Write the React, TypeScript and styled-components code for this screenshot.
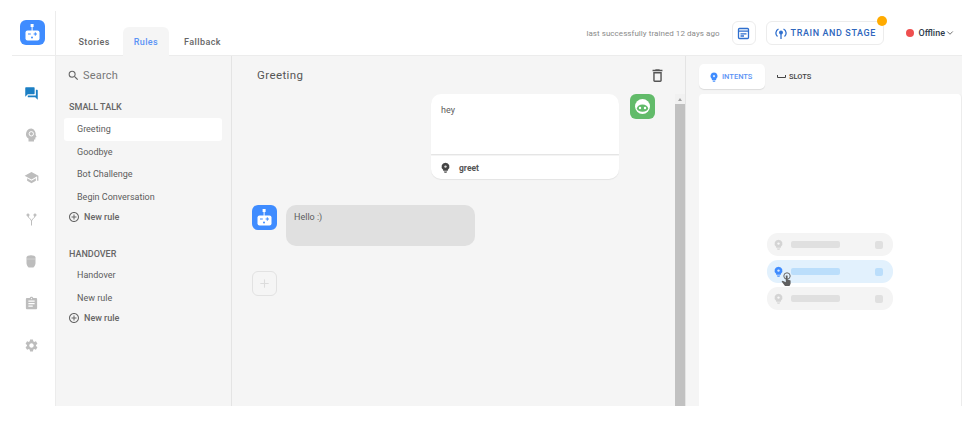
import React from 'react';
import styled, { createGlobalStyle } from 'styled-components';
import {
  MdAddCircleOutline,
  MdAssignment,
  MdOutlineDelete,
  MdQuestionAnswer,
  MdSchool,
  MdSearch,
  MdSettings,
} from 'react-icons/md';
import { ChevronDown, Plus } from 'lucide-react';

const GlobalStyle = createGlobalStyle`
  html, body {
    margin: 0;
    background: #fff;
    overflow: hidden;
  }
  body {
    font-family: Roboto, "Liberation Sans", sans-serif;
  }
`;

const railIcons = ['chat', 'bulb', 'school', 'fork', 'cup', 'clip', 'gear'];

const BotLogo = ({ size }: { size: number }) => (
  <svg width={size} height={size} viewBox="0 0 25 25">
    <rect width="25" height="25" rx="6" fill="#3f8cff" />
    <rect x="10.600" y="4" width="3" height="3" fill="#fff" />
    <rect x="11.600" y="6.500" width="1" height="4.500" fill="#fff" />
    <rect x="5.500" y="10.500" width="14" height="10" rx="2" fill="#fff" />
    <rect x="8" y="13.500" width="2.800" height="1" fill="#3f8cff" />
    <rect x="13.600" y="13.500" width="3.400" height="1" fill="#3f8cff" />
    <rect x="14.800" y="12.300" width="1" height="3.400" fill="#3f8cff" />
    <circle cx="12" cy="17.500" r="1" fill="#3f8cff" />
  </svg>
);

const UserLogo = () => (
  <svg width="25" height="25" viewBox="0 0 25 25">
    <rect width="25" height="25" rx="6" fill="#62bb6a" />
    <circle cx="12.500" cy="12.500" r="7.500" fill="#fff" />
    <ellipse cx="12.500" cy="14.200" rx="5.600" ry="3.600" fill="#62bb6a" />
    <circle cx="10" cy="14" r="1.200" fill="#fff" />
    <circle cx="15" cy="14" r="1.200" fill="#fff" />
  </svg>
);

const Bulb = ({ size, color }: { size: number; color: string }) => (
  <svg width={size} height={size} viewBox="0 0 14 14">
    <path
      d="M7 .8a5 5 0 0 0-3 9v1.400h6V9.800a5 5 0 0 0-3-9zM5 12h4v.8L8 13.600H6l-1-.8z"
      fill={color}
    />
    <circle cx="7" cy="5.800" r="1.500" fill="#fff" opacity="0.8" />
  </svg>
);

const RailIcon = ({ name }: { name: string }) => {
  const grey = '#bdbdbd';
  if (name === 'chat') return <MdQuestionAnswer size={15} color="#1b7fc4" />;
  if (name === 'school') return <MdSchool size={15} color={grey} />;
  if (name === 'clip') return <MdAssignment size={15} color={grey} />;
  if (name === 'gear') return <MdSettings size={15} color={grey} />;
  if (name === 'bulb') {
    return (
      <svg width="13" height="14" viewBox="0 0 13 14">
        <path d="M6.500.5a5.500 5.500 0 0 0-3 10.100V13.500h5.500v-2h1.300V9.500l1.300-.6-1-2A5.500 5.500 0 0 0 6.500.5z" fill={grey} />
        <circle cx="6.300" cy="5.800" r="2.200" fill="none" stroke="#fff" strokeWidth="1" />
      </svg>
    );
  }
  if (name === 'fork') {
    return (
      <svg width="11" height="13" viewBox="0 0 11 13" fill="none" stroke={grey} strokeWidth="1">
        <path d="M2 2.500c0 3 3.500 3.500 3.500 5.500v4.500M9 2.500c0 3-3.500 3.500-3.500 5.500" />
        <circle cx="2" cy="2" r="1.100" fill={grey} />
        <circle cx="9" cy="2" r="1.100" fill={grey} />
      </svg>
    );
  }
  return (
    <svg width="12" height="14" viewBox="0 0 12 14">
      <path d="M1.500 3.500C1.500 .5 10.500 .5 10.500 3.500V9C10.500 11 9 13.500 8 13.500H4C3 13.500 1.500 11 1.500 9z" fill={grey} />
      <path d="M2 5h8" stroke="#d8d8d8" strokeWidth="0.700" />
    </svg>
  );
};

const HintRow = ({ active }: { active?: boolean }) => (
  <Hint active={active}>
    <Bulb size={11} color={active ? '#3f8cff' : '#d4d4d4'} />
    <HintBar active={active} />
    <HintDot active={active} />
    {active && (
      <Cursor viewBox="0 0 12 14" width="12" height="14">
        <circle cx="7" cy="4" r="3.200" fill="none" stroke="#666" strokeWidth="1" />
        <path d="M5.800 3.500h1.800v4l3 1v3.300L9.500 14H5L1.600 9.500l1-.8 3.200 1.600z" fill="#5f5f5f" />
      </Cursor>
    )}
  </Hint>
);

const App = () => (
  <>
    <GlobalStyle />
    <Frame>
      <Rail>
        <LogoCell>
          <BotLogo size={25} />
        </LogoCell>
        <RailNav>
          {railIcons.map((name) => (
            <RailItem key={name}>
              <RailIcon name={name} />
            </RailItem>
          ))}
        </RailNav>
      </Rail>
      <Main>
        <TopBar>
          <Tabs>
            <Tab>Stories</Tab>
            <Tab active>Rules</Tab>
            <Tab>Fallback</Tab>
          </Tabs>
          <TopActions>
            <TrainedText>last successfully trained 12 days ago</TrainedText>
            <SquareButton>
              <svg width="13" height="13" viewBox="0 0 13 13" fill="none" stroke="#2f6fce" strokeWidth="1.300">
                <rect x="1.500" y="1.500" width="10" height="10" rx="1" />
                <path d="M1.500 4.200h10M3.500 6.800h6M3.500 9h3.500" />
              </svg>
            </SquareButton>
            <TrainButton>
              <svg width="12" height="13" viewBox="0 0 12 13" fill="none" stroke="#2f6fce" strokeWidth="1.300">
                <path d="M2.500 9.500a4.500 4.500 0 0 1 1-7.500M9.500 9.500a4.500 4.500 0 0 0-1-7.500" />
                <path d="M6 12V6" />
                <circle cx="6" cy="5.500" r="1.300" fill="#2f6fce" />
              </svg>
              TRAIN AND STAGE
              <Badge />
            </TrainButton>
            <Status>
              <StatusDot />
              Offline
              <ChevronDown size={10} color="#555" />
            </Status>
          </TopActions>
        </TopBar>
        <Body>
          <Sidebar>
            <SearchRow>
              <MdSearch size={13} color="#666" />
              Search
            </SearchRow>
            <GroupTitle>SMALL TALK</GroupTitle>
            <RuleItem active>Greeting</RuleItem>
            <RuleItem>Goodbye</RuleItem>
            <RuleItem>Bot Challenge</RuleItem>
            <RuleItem>Begin Conversation</RuleItem>
            <NewRule>
              <MdAddCircleOutline size={12} color="#666" />
              New rule
            </NewRule>
            <GroupTitle second>HANDOVER</GroupTitle>
            <RuleItem>Handover</RuleItem>
            <RuleItem>New rule</RuleItem>
            <NewRule>
              <MdAddCircleOutline size={12} color="#666" />
              New rule
            </NewRule>
          </Sidebar>
          <Editor>
            <EditorHead>
              <EditorTitle>Greeting</EditorTitle>
              <MdOutlineDelete size={17} color="#555" />
            </EditorHead>
            <EditorBody>
              <Story>
                <UserRow>
                  <UserCard>
                    <UserText>hey</UserText>
                    <IntentRow>
                      <Bulb size={11} color="#444" />
                      greet
                    </IntentRow>
                  </UserCard>
                  <UserLogo />
                </UserRow>
                <BotRow>
                  <BotLogo size={25} />
                  <BotBubble>Hello :)</BotBubble>
                </BotRow>
                <AddStep>
                  <Plus size={13} color="#dcdcdc" />
                </AddStep>
              </Story>
              <Scrollbar>
                <ScrollArrow />
                <ScrollThumb />
              </Scrollbar>
            </EditorBody>
          </Editor>
          <Aside>
            <AsideTabs>
              <AsideTab active>
                <Bulb size={10} color="#3f8cff" />
                INTENTS
              </AsideTab>
              <AsideTab>
                <svg width="9" height="4" viewBox="0 0 9 4" fill="none" stroke="#444" strokeWidth="1">
                  <path d="M.5 0v2.500h8V0" />
                </svg>
                SLOTS
              </AsideTab>
            </AsideTabs>
            <HelpCard>
              <HintRow />
              <HintRow active />
              <HintRow />
            </HelpCard>
          </Aside>
        </Body>
      </Main>
    </Frame>
  </>
);

const Frame = styled.div`
  width: 950px;
  height: 395px;
  margin: 11px 0 0 12px;
  display: flex;
`;

const Rail = styled.div`
  width: 43px;
  box-sizing: content-box;
  flex-shrink: 0;
  display: flex;
  flex-direction: column;
  border-right: 1px solid #ececec;
`;

const LogoCell = styled.div`
  height: 45px;
  padding: 9px 0 0 8px;
  box-sizing: border-box;
  border-bottom: 1px solid #ececec;
`;

const RailNav = styled.div`
  display: flex;
  flex-direction: column;
  padding-top: 16px;
`;

const RailItem = styled.div`
  height: 42.100px;
  width: 38px;
  display: flex;
  justify-content: center;
  align-items: center;
`;

const Main = styled.div`
  flex: 1;
  min-width: 0;
  display: flex;
  flex-direction: column;
`;

const TopBar = styled.div`
  height: 45px;
  box-sizing: border-box;
  flex-shrink: 0;
  display: flex;
  justify-content: space-between;
  border-bottom: 1px solid #ececec;
`;

const Tabs = styled.div`
  display: flex;
  align-items: flex-end;
  padding-left: 12px;
  margin-bottom: -1px;
`;

const Tab = styled.div<{ active?: boolean }>`
  height: 29px;
  box-sizing: border-box;
  padding: 10px 10.500px 0;
  margin: ${(p) => (p.active ? '0 5px 0 -1px' : '0 4px 0 0')};
  border-radius: 6px 6px 0 0;
  background: ${(p) => (p.active ? '#f5f5f5' : 'transparent')};
  color: ${(p) => (p.active ? '#5b93f5' : '#666')};
  font-size: 9px;
  font-weight: 500;
  letter-spacing: 0.4px;
`;

const TopActions = styled.div`
  display: flex;
  align-items: center;
  height: 44px;
`;

const TrainedText = styled.span`
  font-size: 8px;
  color: #8a8a8a;
  letter-spacing: 0.06px;
  margin-right: 12px;
`;

const SquareButton = styled.div`
  width: 24px;
  height: 24px;
  box-sizing: border-box;
  border: 1px solid #ececec;
  border-radius: 6px;
  display: flex;
  align-items: center;
  justify-content: center;
  margin-right: 10px;
`;

const TrainButton = styled.div`
  position: relative;
  width: 118px;
  height: 24px;
  box-sizing: border-box;
  border: 1px solid #ececec;
  border-radius: 6px;
  display: flex;
  align-items: center;
  gap: 4px;
  padding-left: 8px;
  color: #2f66bd;
  font-size: 9px;
  font-weight: 500;
  letter-spacing: 0.6px;
  white-space: nowrap;
`;

const Badge = styled.span`
  position: absolute;
  top: -6px;
  right: -4px;
  width: 10px;
  height: 10px;
  border-radius: 50%;
  background: #ffab00;
`;

const Status = styled.div`
  display: flex;
  align-items: center;
  margin: 0 7px 0 22px;
  font-size: 9px;
  font-weight: 500;
  color: #2f3a4a;
`;

const StatusDot = styled.span`
  width: 8px;
  height: 8px;
  border-radius: 50%;
  background: #ef4f4f;
  margin-right: 5px;
`;

const Body = styled.div`
  flex: 1;
  min-height: 0;
  display: flex;
  background: #f5f5f5;
`;

const Sidebar = styled.div`
  width: 176px;
  box-sizing: border-box;
  flex-shrink: 0;
  padding: 0 8px;
  border-right: 1px solid #e4e4e4;
`;

const SearchRow = styled.div`
  height: 38px;
  margin-bottom: 2px;
  display: flex;
  align-items: center;
  gap: 3px;
  padding-left: 3px;
  font-size: 11px;
  color: #777;
  letter-spacing: 0.2px;
`;

const GroupTitle = styled.div<{ second?: boolean }>`
  font-size: 9px;
  font-weight: 500;
  color: #666;
  padding-left: 5px;
  margin-top: ${(p) => (p.second ? '16px' : '0')};
  height: ${(p) => (p.second ? '21px' : '22px')};
  line-height: 22px;
`;

const RuleItem = styled.div<{ active?: boolean }>`
  height: 22.500px;
  line-height: 22px;
  width: 158px;
  box-sizing: border-box;
  padding-left: 13px;
  border-radius: 3px;
  background: ${(p) => (p.active ? '#fff' : 'transparent')};
  font-size: 9px;
  color: #5c5c5c;
`;

const NewRule = styled.div`
  display: flex;
  align-items: center;
  gap: 4px;
  height: 20px;
  margin-top: -1px;
  padding-left: 4px;
  font-size: 9px;
  font-weight: 500;
  color: #666;
`;

const Editor = styled.div`
  width: 454px;
  box-sizing: border-box;
  flex-shrink: 0;
  display: flex;
  flex-direction: column;
  border-right: 1px solid #e4e4e4;
`;

const EditorHead = styled.div`
  height: 38px;
  flex-shrink: 0;
  display: flex;
  align-items: center;
  justify-content: space-between;
  padding: 0 19px 0 25px;
`;

const EditorTitle = styled.span`
  font-size: 11.500px;
  color: #555;
  letter-spacing: 0.4px;
`;

const EditorBody = styled.div`
  flex: 1;
  min-height: 0;
  display: flex;
`;

const Story = styled.div`
  flex: 1;
  min-width: 0;
  padding-left: 20px;
`;

const UserRow = styled.div`
  display: flex;
  justify-content: flex-end;
  align-items: flex-start;
  gap: 11px;
  padding-right: 20px;
`;

const UserCard = styled.div`
  width: 188px;
`;

const UserText = styled.div`
  height: 60px;
  box-sizing: border-box;
  padding: 11px 10px;
  background: #fff;
  border-radius: 10px 10px 0 0;
  box-shadow: 0 1px 1px rgba(0, 0, 0, 0.07);
  font-size: 9px;
  color: #5c5c5c;
`;

const IntentRow = styled.div`
  height: 23px;
  margin-top: 2px;
  display: flex;
  align-items: center;
  gap: 8px;
  padding-left: 9px;
  background: #fff;
  border-radius: 0 0 10px 10px;
  box-shadow: 0 1px 1px rgba(0, 0, 0, 0.07);
  font-size: 8.500px;
  font-weight: 700;
  color: #555;
`;

const BotRow = styled.div`
  display: flex;
  align-items: flex-start;
  gap: 9px;
  margin-top: 26px;
`;

const BotBubble = styled.div`
  width: 189px;
  height: 41px;
  box-sizing: border-box;
  padding: 7px 8px;
  background: #e0e0e0;
  border-radius: 10px;
  font-size: 9px;
  color: #5c5c5c;
`;

const AddStep = styled.div`
  width: 25px;
  height: 25px;
  margin-top: 25px;
  box-sizing: border-box;
  border: 1px solid #e2e2e2;
  border-radius: 6px;
  display: flex;
  align-items: center;
  justify-content: center;
`;

const Scrollbar = styled.div`
  width: 10px;
  flex-shrink: 0;
  display: flex;
  flex-direction: column;
`;

const ScrollArrow = styled.div`
  height: 10px;
  flex-shrink: 0;
  background: #f1f1f1;
  display: flex;
  justify-content: center;
  align-items: center;
  &::before {
    content: '';
    border-left: 2.500px solid transparent;
    border-right: 2.500px solid transparent;
    border-bottom: 3px solid #a3a3a3;
  }
`;

const ScrollThumb = styled.div`
  flex: 1;
  background: #c1c1c1;
`;

const Aside = styled.div`
  flex: 1;
  min-width: 0;
  display: flex;
  flex-direction: column;
  padding-left: 13px;
`;

const AsideTabs = styled.div`
  height: 38px;
  flex-shrink: 0;
  display: flex;
  align-items: flex-start;
  padding-top: 8px;
  box-sizing: border-box;
`;

const AsideTab = styled.div<{ active?: boolean }>`
  width: ${(p) => (p.active ? '66px' : '54px')};
  height: 25px;
  box-sizing: border-box;
  display: flex;
  align-items: center;
  gap: 3px;
  padding-left: ${(p) => (p.active ? '10px' : '12px')};
  border-radius: 5px;
  background: ${(p) => (p.active ? '#fff' : 'transparent')};
  box-shadow: ${(p) => (p.active ? '0 1px 1px rgba(0, 0, 0, 0.1)' : 'none')};
  color: ${(p) => (p.active ? '#5b93f5' : '#444')};
  font-size: 7.500px;
  font-weight: 500;
`;

const HelpCard = styled.div`
  flex: 1;
  background: #fff;
  border-right: 1px solid #ececec;
  border-radius: 4px 4px 0 0;
  display: flex;
  flex-direction: column;
  align-items: center;
  gap: 4px;
  padding-top: 139px;
`;

const Hint = styled.div<{ active?: boolean }>`
  position: relative;
  width: 126px;
  height: 23px;
  box-sizing: border-box;
  flex-shrink: 0;
  display: flex;
  align-items: center;
  padding: 0 10px 0 6px;
  border-radius: 11px;
  background: ${(p) => (p.active ? '#e2f1fd' : '#f4f4f4')};
`;

const HintBar = styled.span<{ active?: boolean }>`
  width: 49px;
  height: 7px;
  margin-left: 7px;
  border-radius: 2px;
  background: ${(p) => (p.active ? '#bbdefb' : '#e0e0e0')};
`;

const HintDot = styled.span<{ active?: boolean }>`
  width: 8px;
  height: 8px;
  margin-left: auto;
  border-radius: 2px;
  background: ${(p) => (p.active ? '#bbdefb' : '#e0e0e0')};
`;

const Cursor = styled.svg`
  position: absolute;
  left: 13px;
  top: 12px;
`;

export default App;
